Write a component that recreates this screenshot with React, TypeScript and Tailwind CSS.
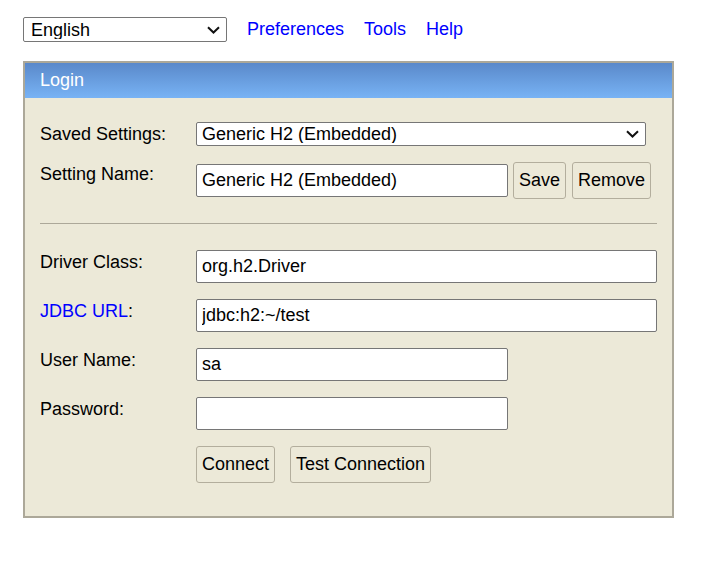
import React from "react";

function Chevron() {
  return (
    <svg
      className="pointer-events-none absolute right-[7px] top-1/2 -translate-y-1/2"
      width="13"
      height="8"
      viewBox="0 0 13 8"
      fill="none"
    >
      <path d="M1 1.2 L6.5 6.5 L12 1.2" stroke="#111" strokeWidth="2" />
    </svg>
  );
}

function Select({ value, className, pad }: { value: string; className: string; pad: string }) {
  return (
    <div className={`relative ${className}`}>
      <select
        defaultValue={value}
        className={`block h-full w-full appearance-none rounded-[2px] border border-[#767676] bg-white ${pad} pr-[24px] text-[18px] leading-none text-black outline-none`}
      >
        <option>{value}</option>
      </select>
      <Chevron />
    </div>
  );
}

function Field({ value, wide, type = "text" }: { value: string; wide?: boolean; type?: string }) {
  return (
    <input
      type={type}
      defaultValue={value}
      className={`block h-[33px] ${wide ? "w-[461px]" : "w-[312px]"} rounded-[2px] border border-[#767676] bg-white px-[5px] text-[18px] text-black outline-none`}
    />
  );
}

function Btn({ children }: { children: React.ReactNode }) {
  return (
    <button className="h-[37px] rounded-[3px] border border-[#b3ae9d] bg-[#ece9d8] px-[5px] text-[18px] text-black">
      {children}
    </button>
  );
}

function Row({ label, children, className = "" }: { label: React.ReactNode; children: React.ReactNode; className?: string }) {
  return (
    <div className={`flex items-start ${className}`}>
      <div className="w-[156px] pt-[2px] leading-[20px] text-black">{label}</div>
      {children}
    </div>
  );
}

export default function App() {
  return (
    <div className="min-h-screen bg-white pl-[23px] pt-[16px] font-['Liberation_Sans',Arial,sans-serif] text-[18px]">
      <div className="flex items-center">
        <Select value="English" className="h-[25px] w-[204px]" pad="pl-[7px]" />
        <a href="#" className="ml-[20px] text-[#0000ff]">Preferences</a>
        <a href="#" className="ml-[20px] text-[#0000ff]">Tools</a>
        <a href="#" className="ml-[20px] text-[#0000ff]">Help</a>
      </div>

      <div className="mt-[18px] w-[651px] border-2 border-[#aca899] bg-[#ece9d8]">
        <div className="flex h-[35px] items-center bg-gradient-to-b from-[#5a89ca] to-[#78b3f5] pl-[15px] text-white">
          Login
        </div>
        <div className="px-[15px] pb-[33px] pt-[24px]">
          <Row label="Saved Settings:">
            <Select value="Generic H2 (Embedded)" className="h-[24px] w-[450px]" pad="pl-[5px]" />
          </Row>
          <Row label="Setting Name:" className="mt-[16px]">
            <div className="flex items-center">
              <Field value="Generic H2 (Embedded)" />
              <div className="ml-[5px] flex gap-[6px]">
                <Btn>Save</Btn>
                <Btn>Remove</Btn>
              </div>
            </div>
          </Row>

          <div className="mt-[24px] border-t border-[#aca899]" />

          <Row label="Driver Class:" className="mt-[26px]">
            <Field value="org.h2.Driver" wide />
          </Row>
          <Row
            label={
              <span>
                <a href="#" className="text-[#0000ff]">JDBC URL</a>:
              </span>
            }
            className="mt-[16px]"
          >
            <Field value="jdbc:h2:~/test" wide />
          </Row>
          <Row label="User Name:" className="mt-[16px]">
            <Field value="sa" />
          </Row>
          <Row label="Password:" className="mt-[16px]">
            <Field value="" type="password" />
          </Row>
          <div className="mt-[16px] flex gap-[15px] pl-[156px]">
            <Btn>Connect</Btn>
            <Btn>Test Connection</Btn>
          </div>
        </div>
      </div>
    </div>
  );
}
